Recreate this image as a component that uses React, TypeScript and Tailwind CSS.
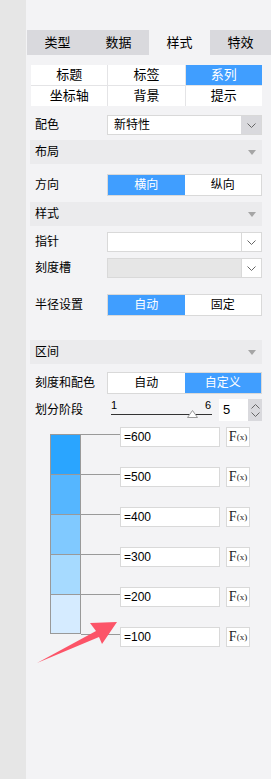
import React from 'react';

const font = "font-['Liberation_Sans','Noto_Sans_CJK_SC',sans-serif]";

function Chevron({ className = '' }: { className?: string }) {
  return (
    <svg width="9" height="5" viewBox="0 0 9 5" className={className}>
      <path d="M0.5 0.5 L4.5 4.5 L8.5 0.5" fill="none" stroke="#666" strokeWidth="1" />
    </svg>
  );
}

function SectionHeader({ title }: { title: string }) {
  return (
    <div className="flex h-[24px] items-center justify-between bg-[#ebebed] pl-[5px] pr-[6px]">
      <span>{title}</span>
      <svg width="8" height="5" viewBox="0 0 8 5">
        <path d="M0 0 H8 L4 5 Z" fill="#a5a5a5" />
      </svg>
    </div>
  );
}

function Row({ label, h = 'h-[20px]', children }: { label: string; h?: string; children: React.ReactNode }) {
  return (
    <div className={`flex items-center ${h}`}>
      <div className="w-[77px] shrink-0 pl-[5px]">{label}</div>
      <div className="flex h-full flex-1">{children}</div>
    </div>
  );
}

function Toggle({ left, right, active }: { left: string; right: string; active: 0 | 1 }) {
  return (
    <div className="flex h-full w-full border border-[#d9d9d9] bg-white">
      <div className={`flex flex-1 items-center justify-center ${active === 0 ? 'bg-[#409eff] text-white' : ''}`}>{left}</div>
      <div className={`flex flex-1 items-center justify-center ${active === 1 ? 'bg-[#409eff] text-white' : ''}`}>{right}</div>
    </div>
  );
}

function Select({ value = '', disabled = false, grayArrow = false }: { value?: string; disabled?: boolean; grayArrow?: boolean }) {
  return (
    <div className="flex h-full w-full border border-[#d9d9d9] bg-white">
      <div className={`flex flex-1 items-center pl-[6px] ${disabled ? 'bg-[#e6e6e6]' : ''}`}>{value}</div>
      <div className={`flex w-[20px] items-center justify-center ${grayArrow ? 'bg-[#d9d9dd]' : 'border-l border-[#d9d9d9]'}`}>
        <Chevron />
      </div>
    </div>
  );
}

const tabs = ['类型', '数据', '样式', '特效'];
const subTabs = ['标题', '标签', '系列', '坐标轴', '背景', '提示'];
const segments = ['bg-[#2aa5ff]', 'bg-[#55b6ff]', 'bg-[#80c9ff]', 'bg-[#a6daff]', 'bg-[#d5ebff]'];
const values = ['=600', '=500', '=400', '=300', '=200', '=100'];

export default function App() {
  return (
    <div className={`relative flex min-h-[779px] w-[271px] text-[12px] text-black ${font}`}>
      <div className="w-[26px] shrink-0 bg-[#e6e6e6]" />
      <div className="flex flex-1 flex-col bg-[#f3f3f5] pb-[40px]">
        <div className="ml-[1px] mt-[30px] flex h-[25px]">
          {tabs.map((t) => (
            <div
              key={t}
              className={`flex flex-1 items-center justify-center text-[13px] ${t === '样式' ? 'bg-[#f3f3f5]' : 'bg-[#d9d9dd]'}`}
            >
              {t}
            </div>
          ))}
        </div>

        <div className="ml-[4px] mr-[9px] flex flex-col">
          <div className="ml-[1px] mt-[10px] grid grid-cols-3 gap-px bg-[#e4e4e6]">
            {subTabs.map((t) => (
              <div
                key={t}
                className={`flex h-[20px] items-center justify-center text-[13px] ${t === '系列' ? 'bg-[#409eff] text-white' : 'bg-white'}`}
              >
                {t}
              </div>
            ))}
          </div>

          <div className="mt-[9px]">
            <Row label="配色">
              <Select value="新特性" grayArrow />
            </Row>
          </div>

          <div className="mt-[5px]">
            <SectionHeader title="布局" />
          </div>

          <div className="mt-[10px]">
            <Row label="方向" h="h-[22px]">
              <Toggle left="横向" right="纵向" active={0} />
            </Row>
          </div>

          <div className="mt-[6px]">
            <SectionHeader title="样式" />
          </div>

          <div className="mt-[6px]">
            <Row label="指针">
              <Select />
            </Row>
          </div>

          <div className="mt-[6px]">
            <Row label="刻度槽">
              <Select disabled />
            </Row>
          </div>

          <div className="mt-[16px]">
            <Row label="半径设置" h="h-[22px]">
              <Toggle left="自动" right="固定" active={0} />
            </Row>
          </div>

          <div className="mt-[24px]">
            <SectionHeader title="区间" />
          </div>

          <div className="mt-[8px]">
            <Row label="刻度和配色" h="h-[22px]">
              <Toggle left="自动" right="自定义" active={1} />
            </Row>
          </div>

          <div className="mt-[5px]">
            <Row label="划分阶段" h="h-[22px]">
              <div className="relative w-[105px]">
                <span className="absolute left-[4px] top-[1px] text-[11px] leading-none">1</span>
                <span className="absolute left-[98px] top-[1px] text-[11px] leading-none">6</span>
                <div className="absolute left-[4px] top-[15px] h-px w-[101px] bg-[#333]" />
                <svg className="absolute left-[80px] top-[11px]" width="11" height="8" viewBox="0 0 11 8">
                  <path d="M5.5 0.5 L10.5 7.5 H0.5 Z" fill="#fff" stroke="#999" strokeWidth="1" />
                </svg>
              </div>
              <div className="ml-[7px] flex w-[43px]">
                <div className="flex w-[29px] items-center bg-white pl-[4px] text-[13px]">5</div>
                <div className="flex flex-1 flex-col items-center justify-center gap-[3px] bg-[#d9d9dd]">
                  <Chevron className="rotate-180" />
                  <Chevron />
                </div>
              </div>
            </Row>
          </div>

          <div className="mt-[6px] flex">
            <div className="ml-[20px] mt-[7px] flex w-[31px] flex-col self-start border border-[#999]">
              {segments.map((s, i) => (
                <div key={s} className={`${s} ${i < 4 ? 'h-[40px] border-b border-[#999]' : 'h-[38px]'}`} />
              ))}
            </div>
            <div className="flex flex-col">
              {values.map((v) => (
                <div key={v} className="flex h-[40px] items-start">
                  <div className="mt-[7px] h-px w-[39px] bg-[#999]" />
                  <div className="flex h-[20px] w-[100px] items-center border border-[#d9d9d9] bg-white pl-[3px]">{v}</div>
                  <div className="ml-[6px] flex h-[20px] w-[24px] items-center justify-center border border-[#d9d9d9] bg-white font-['Liberation_Serif',serif] text-[#222]">
                    <span className="text-[14px] leading-none">F</span>
                    <span className="text-[9px] leading-none">(x)</span>
                  </div>
                </div>
              ))}
            </div>
          </div>
        </div>
      </div>

      <svg className="pointer-events-none absolute left-0 top-0" width="271" height="779" viewBox="0 0 271 779">
        <path d="M37 663 L96 631 L90 623 L117 622 L102 644 L99 637 Z" fill="#fc5468" />
      </svg>
    </div>
  );
}
